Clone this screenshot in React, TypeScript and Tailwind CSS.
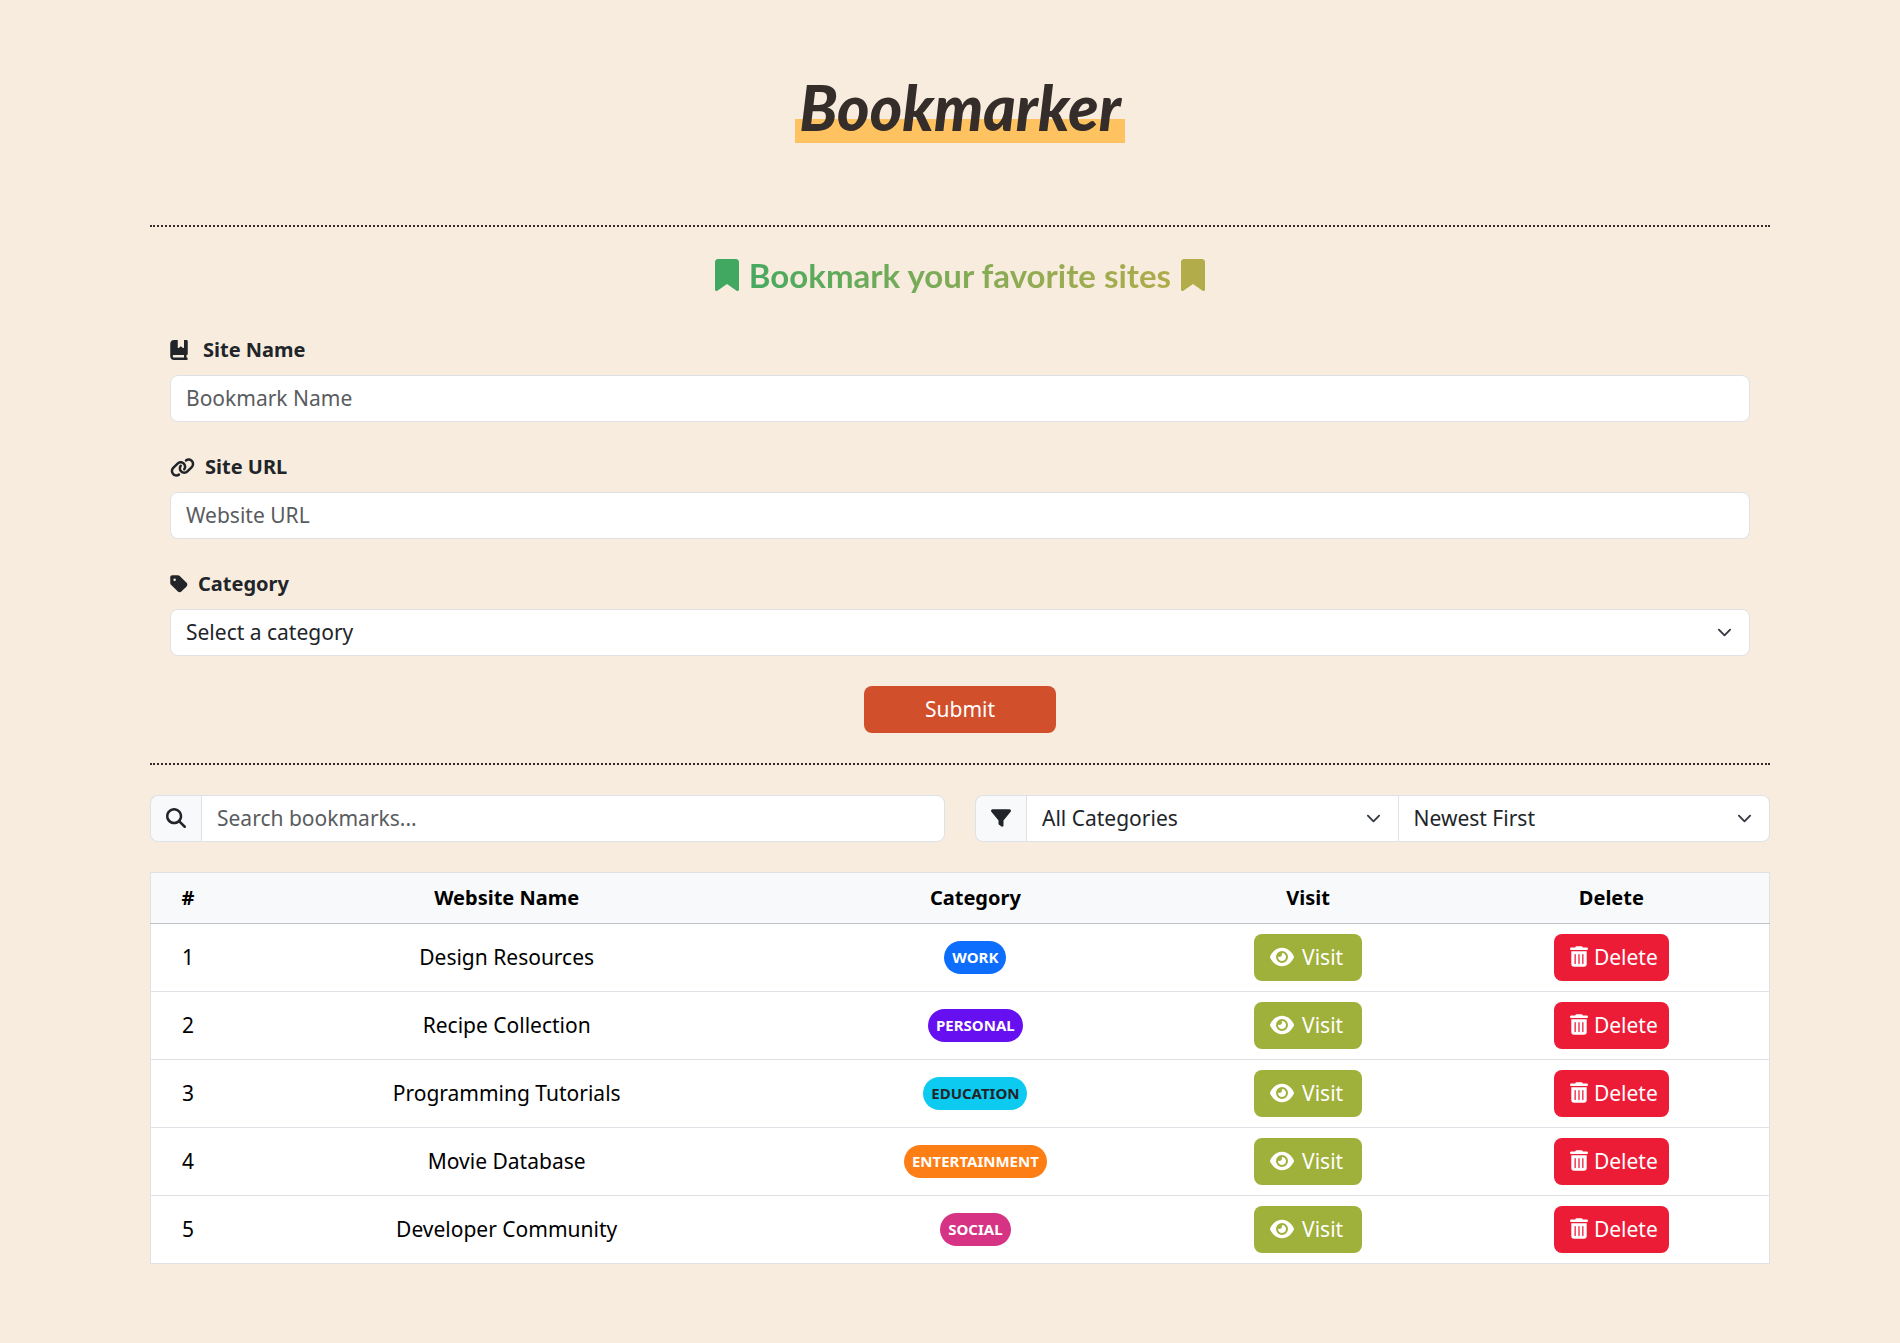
import type { ReactNode, SelectHTMLAttributes } from 'react';
import {
  FaBookBookmark,
  FaBookmark,
  FaEye,
  FaFilter,
  FaLink,
  FaMagnifyingGlass,
  FaTag,
  FaTrashCan,
} from 'react-icons/fa6';

const bookmarks = [
  { name: 'Design Resources', category: 'WORK', tone: 'bg-[#0d6efd] text-white' },
  { name: 'Recipe Collection', category: 'PERSONAL', tone: 'bg-[#6610f2] text-white' },
  { name: 'Programming Tutorials', category: 'EDUCATION', tone: 'bg-[#0dcaf0] text-[#212529]' },
  { name: 'Movie Database', category: 'ENTERTAINMENT', tone: 'bg-[#fd7e14] text-white' },
  { name: 'Developer Community', category: 'SOCIAL', tone: 'bg-[#d63384] text-white' },
];

function Select({
  wrapperClass = '',
  className = '',
  children,
  ...props
}: SelectHTMLAttributes<HTMLSelectElement> & { wrapperClass?: string; children: ReactNode }) {
  return (
    <div className={`relative ${wrapperClass}`}>
      <select
        className={`block h-[47px] w-full appearance-none border border-[#dee2e6] bg-white pr-12 pb-0.5 pl-[15px] text-[#212529] ${className}`}
        {...props}
      >
        {children}
      </select>
      <svg
        viewBox="0 0 16 16"
        className="pointer-events-none absolute top-4 right-[18px] size-[15px]"
        fill="none"
        stroke="#343a40"
        strokeWidth="2"
        strokeLinecap="round"
        strokeLinejoin="round"
      >
        <path d="m2 5 6 6 6-6" />
      </svg>
    </div>
  );
}

function Field({ id, icon, label, children }: { id: string; icon: ReactNode; label: string; children: ReactNode }) {
  return (
    <div className="mb-[30px]">
      <label htmlFor={id} className="mb-2 flex h-8 items-center pb-0.5 text-[20px] font-bold text-[#212529]">
        {icon}
        {label}
      </label>
      {children}
    </div>
  );
}

const inputClass =
  'block h-[47px] w-full border border-[#dee2e6] bg-white px-[15px] pb-0.5 text-[#212529] placeholder:text-[#595c5f]';

export default function App() {
  return (
    <div className="min-h-screen bg-[#f8ecde] px-5 pb-[78px] font-['Noto_Sans','Open_Sans',sans-serif] text-[21px] leading-8 lg:pr-[130px] lg:pl-[150px]">
      <header className="flex h-[225px] justify-center pt-[63px]">
        <h1 className="h-20 bg-[linear-gradient(to_bottom,transparent_70%,#ffc260_70%)] px-1 pt-1 font-['Lato',cursive] text-[62px] leading-[80px] font-black text-[#352d29] italic">
          Bookmarker
        </h1>
      </header>

      <section className="border-y-2 border-dotted border-[#352d29] px-5 pb-[30px]">
        <h2 className="flex h-24 items-center justify-center">
          <span className="flex items-center gap-[10px] text-[33px] font-bold font-['Lato',sans-serif]">
            <FaBookmark className="h-8 w-6 text-[#40a860]" />
            <span className="bg-linear-to-r from-[#45a95f] to-[#aeac4b] bg-clip-text leading-10 text-transparent">
              Bookmark your favorite sites
            </span>
            <FaBookmark className="h-8 w-6 text-[#b3ac4a]" />
          </span>
        </h2>
        <form className="mt-3" onSubmit={(e) => e.preventDefault()}>
          <Field id="site-name" label="Site Name" icon={<FaBookBookmark className="mr-[15px] h-5 w-[18px]" />}>
            <input id="site-name" type="text" placeholder="Bookmark Name" className={`${inputClass} rounded-lg`} />
          </Field>
          <Field id="site-url" label="Site URL" icon={<FaLink className="mr-[10px] size-[25px]" />}>
            <input id="site-url" type="text" placeholder="Website URL" className={`${inputClass} rounded-lg`} />
          </Field>
          <Field id="category" label="Category" icon={<FaTag className="mr-[10px] h-5 w-[18px]" />}>
            <Select id="category" className="rounded-lg">
              <option>Select a category</option>
              <option>Work</option>
              <option>Personal</option>
              <option>Education</option>
              <option>Entertainment</option>
              <option>Social</option>
            </Select>
          </Field>
          <button type="submit" className="mx-auto block h-[47px] w-48 rounded-lg bg-[#d1502b] pb-0.5 text-white">
            Submit
          </button>
        </form>
      </section>

      <section className="mt-[30px] grid gap-[30px] lg:grid-cols-2">
        <div className="flex">
          <label
            htmlFor="search"
            className="flex w-[51px] items-center justify-center rounded-l-lg border border-r-0 border-[#dee2e6] bg-[#f8f9fa] pb-0.5 text-[#212529]"
          >
            <FaMagnifyingGlass className="size-5" aria-label="Search" />
          </label>
          <input id="search" type="text" placeholder="Search bookmarks..." className={`${inputClass} min-w-0 flex-1 rounded-r-lg`} />
        </div>
        <div className="flex">
          <span className="flex w-[51px] items-center justify-center rounded-l-lg border border-r-0 border-[#dee2e6] bg-[#f8f9fa] pb-0.5 text-[#212529]">
            <FaFilter className="size-5" />
          </span>
          <Select aria-label="Filter by category" wrapperClass="flex-1">
            <option>All Categories</option>
          </Select>
          <Select aria-label="Sort order" wrapperClass="-ml-px flex-1" className="rounded-r-lg">
            <option>Newest First</option>
          </Select>
        </div>
      </section>

      <table className="mt-[30px] w-full table-fixed border-collapse border border-[#dee2e6] bg-white text-center text-black">
        <colgroup>
          <col className="w-[4.6%]" />
          <col className="w-[34.8%]" />
          <col className="w-[23.1%]" />
          <col className="w-[18%]" />
          <col className="w-[19.5%]" />
        </colgroup>
        <thead>
          <tr className="h-[51px] border-b border-[#c0c4c8] bg-[#f8f9fa] text-[20px]">
            <th scope="col">#</th>
            <th scope="col">Website Name</th>
            <th scope="col">Category</th>
            <th scope="col">Visit</th>
            <th scope="col">Delete</th>
          </tr>
        </thead>
        <tbody>
          {bookmarks.map((b, i) => (
            <tr key={b.name} className="h-[68px] border-b border-[#dee2e6]">
              <td className="pb-0.5">{i + 1}</td>
              <td className="pb-0.5">{b.name}</td>
              <td className="pb-0.5">
                <span className={`inline-block h-[33px] rounded-full px-2 align-middle text-[15px] leading-8 font-bold ${b.tone}`}>
                  {b.category}
                </span>
              </td>
              <td>
                <button type="button" className="inline-flex h-[47px] w-[108px] items-center gap-2 rounded-lg bg-[#9fb03b] pb-0.5 pl-4 align-middle text-white">
                  <FaEye className="size-6" />
                  Visit
                </button>
              </td>
              <td>
                <button type="button" className="inline-flex h-[47px] w-[115px] items-center gap-1.5 rounded-lg bg-[#ec1c37] pb-0.5 pl-4 align-middle text-white">
                  <FaTrashCan className="h-[21px] w-[18px]" />
                  Delete
                </button>
              </td>
            </tr>
          ))}
        </tbody>
      </table>
    </div>
  );
}
